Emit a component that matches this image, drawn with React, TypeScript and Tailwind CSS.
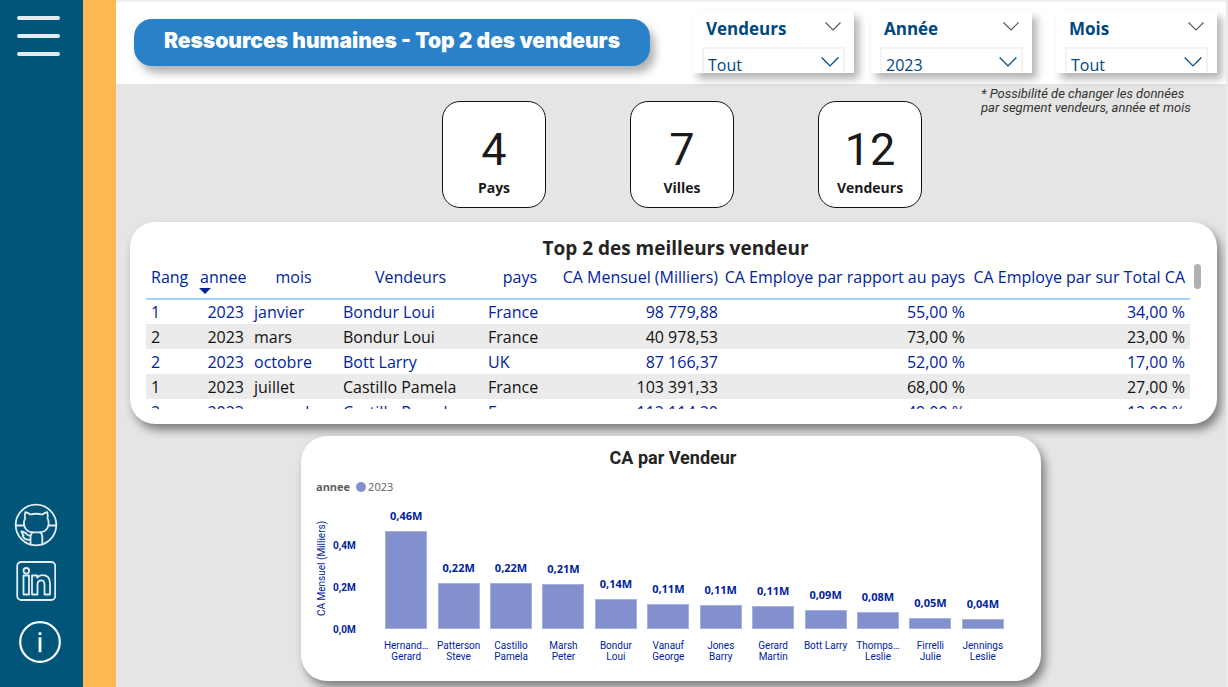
import React from "react";

const SLICERS = [
  { title: "Vendeurs", value: "Tout" },
  { title: "Année", value: "2023" },
  { title: "Mois", value: "Tout" },
];

const CARDS = [
  { value: "4", label: "Pays" },
  { value: "7", label: "Villes" },
  { value: "12", label: "Vendeurs" },
];

const ROWS = [
  ["1", "2023", "janvier", "Bondur Loui", "France", "98 779,88", "55,00 %", "34,00 %"],
  ["2", "2023", "mars", "Bondur Loui", "France", "40 978,53", "73,00 %", "23,00 %"],
  ["2", "2023", "octobre", "Bott Larry", "UK", "87 166,37", "52,00 %", "17,00 %"],
  ["1", "2023", "juillet", "Castillo Pamela", "France", "103 391,33", "68,00 %", "27,00 %"],
  ["2", "2023", "novembre", "Castillo Pamela", "France", "112 114,20", "49,00 %", "12,00 %"],
];

const COLUMNS = [
  { name: "Rang", width: "w-[49px]", head: "text-left pl-[5px]", cell: "text-left" },
  { name: "annee", width: "w-[54px]", head: "text-left pl-[5px]", cell: "text-right" },
  { name: "mois", width: "w-[89px]", head: "text-center px-[5px]", cell: "text-left" },
  { name: "Vendeurs", width: "w-[145px]", head: "text-center px-[5px]", cell: "text-left" },
  { name: "pays", width: "w-[74px]", head: "text-center px-[5px]", cell: "text-left" },
  { name: "CA Mensuel (Milliers)", width: "w-[166px]", head: "text-right pr-[5px]", cell: "text-right" },
  { name: "CA Employe par rapport au pays", width: "w-[247px]", head: "text-right pr-[5px]", cell: "text-right" },
  { name: "CA Employe par sur Total CA", width: "w-[220px]", head: "text-right pr-[5px]", cell: "text-right" },
];

const BARS = [
  { label: "0,46M", height: 98, first: "Hernand…", last: "Gerard" },
  { label: "0,22M", height: 46, first: "Patterson", last: "Steve" },
  { label: "0,22M", height: 46, first: "Castillo", last: "Pamela" },
  { label: "0,21M", height: 45, first: "Marsh", last: "Peter" },
  { label: "0,14M", height: 30, first: "Bondur", last: "Loui" },
  { label: "0,11M", height: 25, first: "Vanauf", last: "George" },
  { label: "0,11M", height: 24, first: "Jones", last: "Barry" },
  { label: "0,11M", height: 23, first: "Gerard", last: "Martin" },
  { label: "0,09M", height: 19, first: "Bott Larry", last: "" },
  { label: "0,08M", height: 17, first: "Thomps…", last: "Leslie" },
  { label: "0,05M", height: 11, first: "Firrelli", last: "Julie" },
  { label: "0,04M", height: 10, first: "Jennings", last: "Leslie" },
];

function Chevron({ className }: { className: string }) {
  return (
    <svg viewBox="0 0 16 9" className={className} fill="none" stroke="currentColor" strokeWidth="1.1" aria-hidden="true">
      <path d="M0.5 0.5 8 8 15.5 0.5" />
    </svg>
  );
}

function GithubIcon() {
  return (
    <svg viewBox="0 0 44 44" className="size-11" fill="none" stroke="#e2ecf1" strokeWidth="1.8" strokeLinejoin="round" strokeLinecap="round" aria-hidden="true">
      <circle cx="22" cy="22" r="20.3" />
      <path d="M11.300 9.200c1.900.2 3.500 1.100 5 2.300 3.700-.9 8.300-.9 12 0 1.500-1.200 3.100-2.100 5-2.300.6 2.200.7 4.200.1 6.200 1.400 2.300 1.700 5 .7 8.100-1.100 3.400-4.600 5.500-8.100 5.800h-7.400c-3.500-.3-7-2.400-8.100-5.800-1-3.100-.7-5.800.7-8.100-.6-2-.5-4 .1-6.200Z" />
      <path d="M2 22.500h8M34.500 22.500H42" />
      <path d="M16.500 41.500v-7.500c0-2.200.8-3.700 2.300-4.700M28.300 41.500v-7.500c0-2.200-.8-3.700-2.300-4.700" />
      <path d="M16.300 36.700c-3.600.4-6-.6-7.300-2.900-.4-.8-.2-1.500.6-1.600-.9-1-1.900-2.200-2.300-3.900 3 .5 4.600 1.400 5.400 2.700.8 1.200 1.900 1.800 3.800 1.600" />
    </svg>
  );
}

function LinkedinIcon() {
  return (
    <svg viewBox="0 0 40 40" className="size-10" fill="none" stroke="#e2ecf1" strokeWidth="1.800" strokeLinejoin="round" aria-hidden="true">
      <rect x="1.200" y="1" width="38" height="38" rx="4" />
      <circle cx="10.300" cy="9.800" r="2.800" />
      <path d="M7.500 14.500h5.500V33.500H7.500Z" />
      <path d="M16 14.500h5.200v2.300c1.300-1.700 2.900-2.600 5.100-2.600 4.900 0 7.700 3 7.700 8.300V33.500h-5.500v-9.800c0-2.900-1.100-4.400-3.300-4.400-2.500 0-3.700 1.600-3.700 4.500v9.700H16Z" />
    </svg>
  );
}

function InfoIcon() {
  return (
    <svg viewBox="0 0 42 42" className="size-[42px]" fill="none" aria-hidden="true">
      <circle cx="21" cy="21" r="19.800" stroke="#fff" strokeWidth="2.200" />
      <path d="M19.600 11.200h2.800v2.800h-2.800zM19.600 16.200h2.800v15h-2.800z" fill="#fff" />
    </svg>
  );
}

function Sidebar() {
  return (
    <nav className="flex w-[116px] shrink-0 flex-col justify-between border-r-[33px] border-[#ffb952] bg-[#005578]">
      <button type="button" aria-label="Menu" className="ml-[17px] mt-4 flex w-[43px] flex-col gap-3.5">
        <span className="h-1 w-full rounded-full bg-[#e2ebf0]" />
        <span className="h-1 w-full rounded-full bg-[#e2ebf0]" />
        <span className="h-1 w-full rounded-full bg-[#e2ebf0]" />
      </button>
      <div className="flex flex-col pb-6 pl-3.5">
        <a href="#github" aria-label="GitHub"><GithubIcon /></a>
        <a href="#linkedin" aria-label="LinkedIn" className="ml-0.5 mt-3.5"><LinkedinIcon /></a>
        <a href="#info" aria-label="Informations" className="ml-[5px] mt-5"><InfoIcon /></a>
      </div>
    </nav>
  );
}

function Slicer({ title, value }: { title: string; value: string }) {
  return (
    <div className="h-[62px] w-[161px] overflow-hidden bg-white px-[9px] pt-1.5 text-[#00477f]">
      <div className="flex h-[30px] items-start justify-between px-1">
        <label htmlFor={title} className="text-[17px] font-bold leading-6">{title}</label>
        <button type="button" aria-label={`Options ${title}`} className="mt-[5px] text-[#555]">
          <Chevron className="h-[9px] w-4" />
        </button>
      </div>
      <div className="relative h-8 border-2 border-[#f3f3f3]">
        <select id={title} defaultValue={value} className="h-8 w-full appearance-none bg-transparent pl-1 text-[16px] outline-none">
          <option>{value}</option>
        </select>
        <Chevron className="pointer-events-none absolute right-1 top-2 h-2.5 w-[18px]" />
      </div>
    </div>
  );
}

function Header() {
  return (
    <header className="flex h-[84px] items-start justify-between border-t-2 border-[#efefef] bg-white pl-[18px] pr-[9px]">
      <h1 className="mt-[17px] flex h-[47px] w-[516px] justify-center rounded-[18px] bg-[#2a81c7] pt-[7px] font-['Inter'] text-[21px] font-black leading-[30px] text-white shadow-[5px_7px_9px_rgba(0,0,0,0.3)]">
        Ressources humaines - Top 2 des vendeurs
      </h1>
      <div className="mt-[9px] flex">
        <div className="mr-[17px] shadow-[5px_6px_8px_rgba(0,0,0,0.3)]"><Slicer {...SLICERS[0]} /></div>
        <div className="mr-6 shadow-[5px_6px_8px_rgba(0,0,0,0.3)]"><Slicer {...SLICERS[1]} /></div>
        <div className="shadow-[5px_6px_8px_rgba(0,0,0,0.3)]"><Slicer {...SLICERS[2]} /></div>
      </div>
    </header>
  );
}

function TopTable() {
  return (
    <section className="ml-3.5 mr-[9px] mt-3.5 h-[202px] rounded-[25px] bg-white pl-4 pr-4 pt-3 shadow-[4px_6px_10px_rgba(0,0,0,0.45)]">
      <h2 className="pl-1 text-center text-[19px] font-bold leading-7 text-[#252423]">Top 2 des meilleurs vendeur</h2>
      <div className="flex h-[147px] items-start gap-1 overflow-hidden">
        <table className="flex-1 table-fixed border-collapse text-[16px] leading-6">
          <thead>
            <tr className="h-[37px] border-b-2 border-[#a0d1ff] text-[#00239c]">
              {COLUMNS.map((c) => (
                <th key={c.name} scope="col" className={`${c.width} ${c.head} relative whitespace-nowrap pb-[9px] pt-0.5 font-normal leading-6`}>
                  {c.name}
                  {c.name === "annee" && (
                    <span className="absolute bottom-1 left-1 size-0 border-x-[6px] border-t-[6px] border-x-transparent border-t-[#00239c]" />
                  )}
                </th>
              ))}
            </tr>
          </thead>
          <tbody>
            {ROWS.map((row, i) => (
              <tr key={i} className="h-[25px] text-[#00239c] even:bg-[#ebebeb] even:text-[#111]">
                {row.map((cell, j) => (
                  <td key={j} className={`${COLUMNS[j].cell} whitespace-nowrap px-[5px] pt-px leading-[23px]`}>{cell}</td>
                ))}
              </tr>
            ))}
          </tbody>
        </table>
        <div className="mt-0.5 h-[25px] w-[7px] rounded-full bg-[#b0b0b0]" />
      </div>
    </section>
  );
}

function Chart() {
  return (
    <section className="mx-auto mt-3 h-[245px] w-[740px] rounded-[26px] bg-white px-[15px] pt-2 shadow-[4px_6px_10px_rgba(0,0,0,0.45)]">
      <h2 className="pl-1 text-center font-['Roboto'] text-[18px] font-bold leading-7 text-[#252423]">CA par Vendeur</h2>
      <div className="mt-1.5 flex items-center text-[11px] leading-[18px] text-[#605e5c]">
        <span className="font-bold">annee</span>
        <span className="ml-1.5 mr-0.5 size-2.5 rounded-full bg-[#8290cd]" />
        <span>2023</span>
      </div>
      <div className="flex font-['Roboto'] text-[#00239c]">
        <div className="mt-6 h-[96px] w-3 rotate-180 text-[10px] leading-3 [writing-mode:vertical-rl] whitespace-nowrap">CA Mensuel (Milliers)</div>
        <div className="ml-[5px] mt-[44px] flex h-[96px] w-[47px] flex-col justify-between text-[10px] font-bold leading-3">
          <span>0,4M</span>
          <span>0,2M</span>
          <span>0,0M</span>
        </div>
        <div className="mr-[17px] flex h-[168px] flex-1">
          {BARS.map((b, i) => (
            <div key={i} className="flex flex-1 flex-col items-center">
              <div className="flex h-[133px] w-full flex-col items-center justify-end">
                <span className="mb-[7px] font-['Open_Sans'] text-[11px] font-bold leading-4">{b.label}</span>
                <div className="w-[42px] border border-[#a7b1dd] bg-[#8290cd]" style={{ height: b.height }} />
              </div>
              <div className="mt-[11px] whitespace-nowrap text-center text-[10px] leading-[11px]">
                <div>{b.first}</div>
                <div>{b.last}</div>
              </div>
            </div>
          ))}
        </div>
      </div>
    </section>
  );
}

export default function App() {
  return (
    <div className="flex min-h-screen bg-[#e5e5e4] font-['Open_Sans',sans-serif]">
      <Sidebar />
      <main className="min-w-0 flex-1 overflow-hidden border-r-2 border-[#ebebeb]">
        <Header />
        <div className="flex">
          <div className="ml-[326px] mt-[17px] flex gap-[84px]">
            {CARDS.map((c) => (
              <div key={c.label} className="flex h-[107px] w-[104px] flex-col items-center rounded-[18px] border border-[#111] bg-white pt-5 text-[#1a1a1a]">
                <span className="font-['Roboto'] text-[45px] leading-[56px]">{c.value}</span>
                <span className="text-[14px] font-bold leading-5">{c.label}</span>
              </div>
            ))}
          </div>
          <p className="ml-[59px] mt-[3px] whitespace-nowrap font-['Roboto'] text-[13px] italic leading-3.5 text-[#333]">
            * Possibilité de changer les données
            <br />
            par segment vendeurs, année et mois
          </p>
        </div>
        <TopTable />
        <Chart />
      </main>
    </div>
  );
}
